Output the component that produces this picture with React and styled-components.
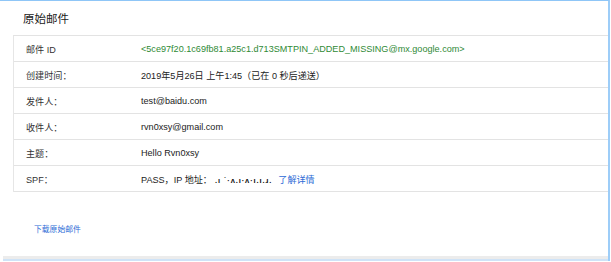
import React from 'react';
import styled, { createGlobalStyle } from 'styled-components';

const GlobalStyle = createGlobalStyle`
  html, body {
    margin: 0;
    padding: 0;
    background: #fff;
  }
  body {
    font-family: "Liberation Sans", Arial, "Noto Sans CJK SC", sans-serif;
    color: #222;
  }
`;

const Frame = styled.div`
  width: 610px;
  height: 261px;
  box-sizing: border-box;
  border-top: 1px solid #8fc6f7;
  border-right: 2px solid #9dcdf8;
  display: flex;
  flex-direction: column;
`;

const Header = styled.div`
  height: 34px;
  display: flex;
  align-items: center;
  padding-left: 23px;
  font-size: 11.5px;
  color: #222;
`;

const Table = styled.div`
  margin-left: 13px;
  border-left: 1px solid #e6e6e6;
  border-top: 1px solid #e3e3e3;
`;

const Row = styled.div`
  display: grid;
  grid-template-columns: 127px 1fr;
  height: 25px;
  align-items: center;
  border-bottom: 1px solid #e3e3e3;
  font-size: 9.1px;
`;

const Label = styled.div`
  padding-left: 12px;
  color: #333;
`;

const Value = styled.div`
  color: ${p => (p.$green ? '#2f8a35' : '#222')};
  white-space: nowrap;
`;

const Masked = styled.span`
  letter-spacing: 0.9px;
  font-weight: bold;
  font-size: 7.5px;
  margin: 0 6px 0 3px;
  color: #111;
`;

const Link = styled.a`
  color: #2c6bd6;
  text-decoration: none;
  font-size: ${p => p.$size || 'inherit'};
`;

const Footer = styled.div`
  flex: 1;
  display: flex;
  flex-direction: column;
`;

const Download = styled.div`
  padding: 26px 0 0 34px;
  flex: 1;
`;

const Strip = styled.div`
  margin-left: 3px;
  height: 3px;
  background: #ececec;
  border-bottom: 2px solid #cfe3f7;
`;

const rows = [
  { label: '邮件 ID', value: '<5ce97f20.1c69fb81.a25c1.d713SMTPIN_ADDED_MISSING@mx.google.com>', green: true },
  { label: '创建时间：', value: '2019年5月26日 上午1:45（已在 0 秒后递送）' },
  { label: '发件人：', value: 'test@baidu.com' },
  { label: '收件人：', value: 'rvn0xsy@gmail.com' },
  { label: '主题：', value: 'Hello Rvn0xsy' },
];

export default function App() {
  return (
    <>
      <GlobalStyle />
      <Frame>
        <Header>原始邮件</Header>
        <Table>
          {rows.map(r => (
            <Row key={r.label}>
              <Label>{r.label}</Label>
              <Value $green={r.green}>{r.value}</Value>
            </Row>
          ))}
          <Row>
            <Label>SPF：</Label>
            <Value>
              PASS，IP 地址：<Masked>.ı ˙·ʌ.ı·ʌ·ı.ı.ɹ.</Masked>
              <Link href="#">了解详情</Link>
            </Value>
          </Row>
        </Table>
        <Footer>
          <Download>
            <Link href="#" $size="7.8px">下载原始邮件</Link>
          </Download>
          <Strip />
        </Footer>
      </Frame>
    </>
  );
}
